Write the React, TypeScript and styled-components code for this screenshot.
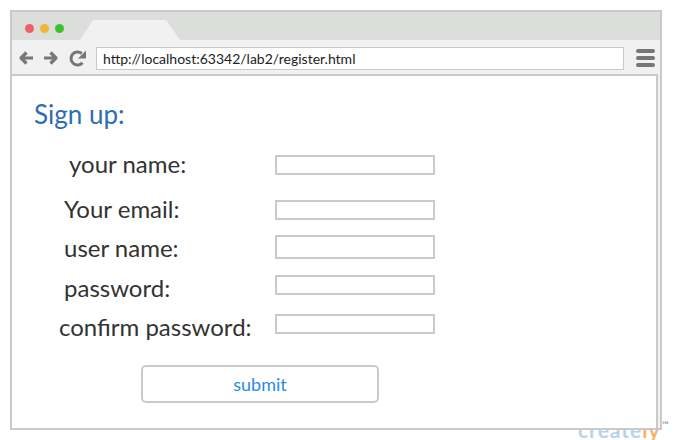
import styled, { createGlobalStyle } from "styled-components";

const Global = createGlobalStyle`
  body {
    margin: 0;
    background: #fff;
    font-family: Lato, "Open Sans", sans-serif;
  }
`;

const Page = styled.div`
  position: relative;
  height: 440px;
  padding: 10px 0 0 10px;
  box-sizing: border-box;
  overflow: hidden;
`;

const Window = styled.div`
  position: relative;
  z-index: 1;
  width: 652px;
  height: 420px;
  box-sizing: border-box;
  border: 2px solid #cacaca;
  display: flex;
  flex-direction: column;
  background: #f1f1f1;
`;

const TitleBar = styled.div`
  height: 28px;
  display: flex;
  align-items: flex-end;
  padding-left: 13px;
  background: #dcdedb;
`;

const Dots = styled.div`
  display: flex;
  gap: 6px;
  margin-bottom: 7px;
`;

const Dot = styled.span<{ $color: string }>`
  width: 9px;
  height: 9px;
  border-radius: 50%;
  background: ${(p) => p.$color};
`;

const Tab = styled.div`
  width: 100px;
  height: 20px;
  margin-left: 16px;
  background: #f1f1f1;
  clip-path: polygon(13px 0, 86px 0, 100% 100%, 0 100%);
`;

const Toolbar = styled.div`
  height: 34px;
  display: flex;
  align-items: center;
  padding: 2px 5px 0 6px;
  box-sizing: border-box;
`;

const NavIcon = styled.svg`
  flex: none;
  margin-right: 9px;
`;

const UrlBox = styled.div`
  flex: 1;
  height: 23px;
  box-sizing: border-box;
  border: 1px solid #c8c8c8;
  background: #fff;
  display: flex;
  align-items: center;
  padding-left: 6px;
  font-size: 14px;
  color: #222;
`;

const Menu = styled.div`
  margin-left: 12px;
  display: flex;
  flex-direction: column;
  gap: 3px;
`;

const MenuBar = styled.span`
  width: 19px;
  height: 4px;
  border-radius: 2px;
  background: #777;
`;

const Content = styled.div`
  flex: 1;
  background: #fff;
  border-top: 2px solid #cacaca;
  border-right: 2px solid #cacaca;
  margin-right: 2px;
  padding: 23px 0 0 22px;
`;

const Title = styled.h1`
  margin: 0;
  font-size: 26px;
  line-height: 31px;
  font-weight: 400;
  color: #2d6db3;
`;

const Form = styled.form`
  margin-top: 22px;
  padding-left: 25px;
  display: flex;
  flex-direction: column;
  align-items: flex-start;
`;

const Row = styled.div<{ $gap: number }>`
  display: flex;
  align-items: flex-start;
  margin-top: ${(p) => p.$gap}px;
`;

const Label = styled.label<{ $indent: number; $mt: number }>`
  width: 216px;
  box-sizing: border-box;
  padding-left: ${(p) => p.$indent}px;
  margin-top: ${(p) => p.$mt}px;
  font-size: 24px;
  line-height: 24px;
  color: #333;
  white-space: nowrap;
`;

const Field = styled.input<{ $mt: number; $h: number }>`
  width: 160px;
  height: ${(p) => p.$h}px;
  margin: ${(p) => p.$mt}px 0 0;
  padding: 0;
  box-sizing: border-box;
  border: 2px solid #cacaca;
  background: #fff;
  outline: none;
`;

const Submit = styled.button`
  width: 238px;
  height: 38px;
  margin: 26px 0 0 82px;
  border: 2px solid #cacaca;
  border-radius: 5px;
  background: #fff;
  font-family: Lato, sans-serif;
  font-size: 18px;
  color: #2b8ae6;
  padding: 0;
`;

const Watermark = styled.div`
  position: absolute;
  z-index: 0;
  left: 578px;
  top: 417px;
  font-size: 21px;
  font-weight: 700;
  color: #b8d2ea;
  letter-spacing: 1px;
  span {
    color: #f7b36b;
  }
`;

const Trademark = styled.div`
  position: absolute;
  left: 662px;
  top: 419px;
  font-size: 9px;
  color: #777;
`;

const rows = [
  { label: "your name:", indent: 10, gap: 0, lmt: 0, fmt: 3, h: 20 },
  { label: "Your email:", indent: 5, gap: 21, lmt: 0, fmt: 3, h: 20 },
  { label: "user name:", indent: 5, gap: 14, lmt: 1, fmt: 0, h: 24 },
  { label: "password:", indent: 5, gap: 15, lmt: 1, fmt: 0, h: 20 },
  { label: "confirm password:", indent: 0, gap: 14, lmt: 1, fmt: 0, h: 20 },
];

export default function App() {
  return (
    <Page>
      <Global />
      <Window>
        <TitleBar>
          <Dots>
            <Dot $color="#ee6069" />
            <Dot $color="#f0b73a" />
            <Dot $color="#3ec22c" />
          </Dots>
          <Tab />
        </TitleBar>
        <Toolbar>
          <NavIcon width="16" height="16" viewBox="0 0 16 16">
            <path d="M15 8H3.5M8.5 2.5L3 8l5.5 5.5" fill="none" stroke="#777" strokeWidth="3.2" strokeLinejoin="round" />
          </NavIcon>
          <NavIcon width="16" height="16" viewBox="0 0 16 16">
            <path d="M1 8h11.5M7.5 2.5L13 8l-5.5 5.5" fill="none" stroke="#777" strokeWidth="3.2" strokeLinejoin="round" />
          </NavIcon>
          <NavIcon width="19" height="19" viewBox="0 0 19 19">
            <path d="M13.7 4.5A6.5 6.5 0 1 0 14.5 13.7" fill="none" stroke="#777" strokeWidth="3" />
            <polygon points="18,1.5 18,9.5 10,9.5" fill="#777" />
          </NavIcon>
          <UrlBox>http://localhost:63342/lab2/register.html</UrlBox>
          <Menu>
            <MenuBar />
            <MenuBar />
            <MenuBar />
          </Menu>
        </Toolbar>
        <Content>
          <Title>Sign up:</Title>
          <Form onSubmit={(e) => e.preventDefault()}>
            {rows.map((r) => (
              <Row key={r.label} $gap={r.gap}>
                <Label $indent={r.indent} $mt={r.lmt}>
                  {r.label}
                </Label>
                <Field $mt={r.fmt} $h={r.h} />
              </Row>
            ))}
            <Submit type="submit">submit</Submit>
          </Form>
        </Content>
      </Window>
      <Watermark>
        create<span>ly</span>
      </Watermark>
      <Trademark>™</Trademark>
    </Page>
  );
}
